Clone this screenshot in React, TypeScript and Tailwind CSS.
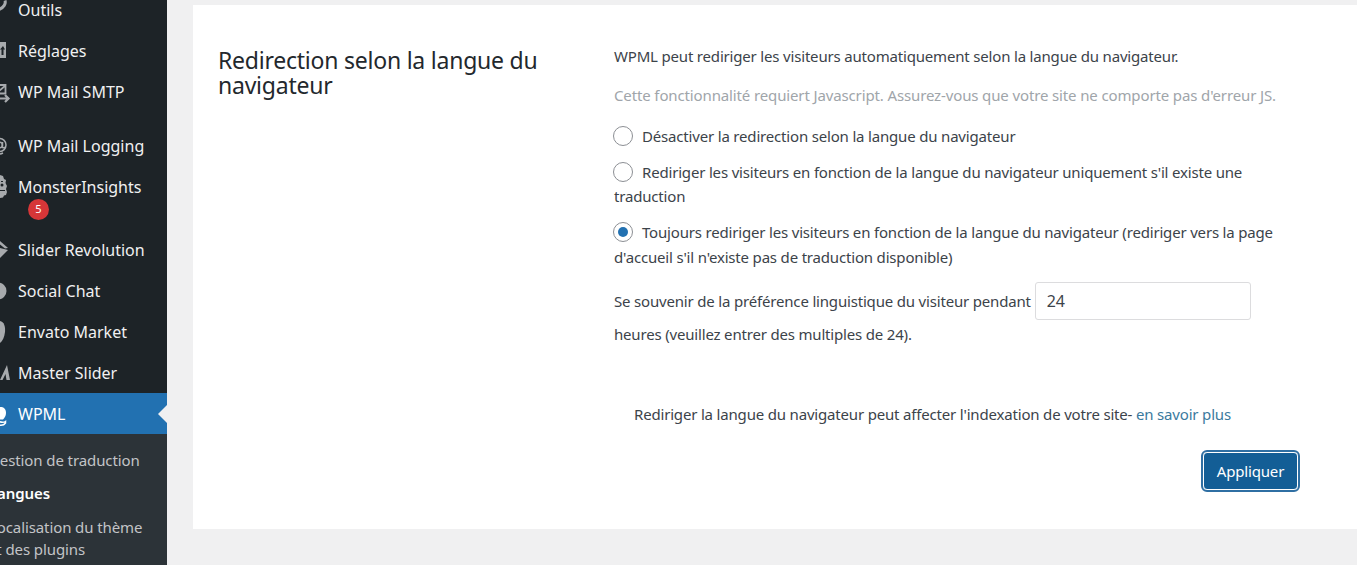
const menu = [
  { label: "Outils", icon: "tools", cls: "h-[41px] -mt-[11px]" },
  { label: "Réglages", icon: "settings", cls: "h-[41px]" },
  { label: "WP Mail SMTP", icon: "smtp", cls: "h-[41px] mb-[13px]" },
  { label: "WP Mail Logging", icon: "at", cls: "h-[41px]" },
];
const menu2 = [
  { label: "Slider Revolution", icon: "slider" },
  { label: "Social Chat", icon: "chat" },
  { label: "Envato Market", icon: "leaf" },
  { label: "Master Slider", icon: "master" },
];

// the sidebar is scrolled sideways in the picture, so the icons are cut at x=0
function MenuIcon({ name }: { name: string }) {
  const c = "#a7aaad";
  return (
    <svg width="18" height="24" viewBox="0 0 18 24" className="shrink-0 -ml-[9px] mr-[9px] overflow-visible">
      {name === "tools" && <path d="M14 2.500c1 3-1 7-6 9" fill="none" stroke={c} strokeWidth="3" />}
      {name === "settings" && (
        <path d="M8 3h7v16H8zM12 7l-3 3.500h1.500V16h2v-5.500H14z" fill={c} fillRule="evenodd" />
      )}
      {name === "smtp" && (
        <g fill="none" stroke={c} strokeWidth="1.800">
          <path d="M8 5h6.500v8.500H8" />
          <path d="M8 11l6-5" />
          <path d="M9 18.500h8M14 15l3.500 3.500L14 22" strokeWidth="2.200" />
        </g>
      )}
      {name === "at" && (
        <g fill="none" stroke={c} strokeWidth="1.500">
          <circle cx="8.500" cy="11" r="6.500" />
          <circle cx="8.500" cy="11" r="2.800" />
          <path d="M11.500 8v5c0 1 1.500 1 2.500 0M6 19.500c2 1 4 .5 6-.5" />
        </g>
      )}
      {name === "monster" && (
        <g>
          <path d="M9 0l3 1 1 3 2 1-.5 3 1.500 3-1 3 1 3-1 3-2 .5-1 2-3 .5z" fill={c} />
          <circle cx="11" cy="10" r="1.500" fill="#1d2327" />
          <path d="M9 15h5v1H9zM10 6h2v1h-2z" fill="#1d2327" />
        </g>
      )}
      {name === "slider" && (
        <g fill={c}>
          <path d="M9 3l8 7-3 .5-5-4z" />
          <path d="M9 10l8 2-8 8z" />
        </g>
      )}
      {name === "chat" && <circle cx="7" cy="12" r="8.500" fill={c} />}
      {name === "leaf" && <path d="M9 1c4 1 5.500 5 5 11-.5 5-2.500 9-5 11z" fill={c} />}
      {name === "master" && <path d="M9 19l7-15 3 15h-3.500l-1-6-3 6z" fill={c} />}
      {name === "wpml" && (
        <g fill="#fff">
          <path d="M8 5c4-.5 7 1 7 6 0 3-1.500 5-3 6.500H8z" />
          <path d="M8 19.500c2.500 1 5 1 6.500 0v1.500c-1 1.500-4 2.500-6.500 2z" fill="none" stroke="#fff" strokeWidth="1.500" />
        </g>
      )}
    </svg>
  );
}

function MenuRow({ label, icon, cls }: { label: string; icon: string; cls: string }) {
  return (
    <div className={`flex items-center text-[#f0f0f1] ${cls}`}>
      <MenuIcon name={icon} />
      <span>{label}</span>
    </div>
  );
}

function Radio({ checked }: { checked?: boolean }) {
  return (
    <span className="inline-flex w-[20px] h-[20px] rounded-full border border-[#8c8f94] bg-white items-center justify-center align-[1px] mr-[9px] -ml-[1px]">
      <span className={checked ? "block w-[10px] h-[10px] rounded-full bg-[#2271b1]" : "block w-[10px] h-[10px]"} />
    </span>
  );
}

export default function App() {
  return (
    <div className="flex h-[565px] overflow-hidden bg-[#f0f0f1] font-['Noto_Sans',sans-serif] text-[#3c434a]">
      <aside className="w-[167px] shrink-0 bg-[#1d2327] text-[16px] overflow-hidden">
        {menu.map((m) => (
          <MenuRow key={m.label} {...m} />
        ))}
        <div className="h-[63px] text-[#f0f0f1]">
          <div className="flex items-center h-[41px]">
            <MenuIcon name="monster" />
            <span>MonsterInsights</span>
          </div>
          <div className="-mt-[8px] ml-[28px] w-[21px] h-[21px] rounded-full bg-[#d63638] text-white text-[11px] flex items-center justify-center">
            5
          </div>
        </div>
        {menu2.map((m) => (
          <MenuRow key={m.label} {...m} cls="h-[41px]" />
        ))}
        <div className="relative flex items-center h-[41px] bg-[#2271b1] text-white">
          <MenuIcon name="wpml" />
          <span>WPML</span>
          <span className="absolute right-0 top-[12px] w-0 h-0 border-y-[9px] border-y-transparent border-r-[9px] border-r-[#f0f0f1]" />
        </div>
        <div className="bg-[#2c3338] h-[200px] text-[15px] tracking-[-0.1px] text-[#c3c4c7] pt-[15px] -ml-[11px]">
          <div className="leading-[22px]">Gestion de traduction</div>
          <div className="mt-[11px] leading-[22px] font-semibold text-white">Langues</div>
          <div className="mt-[12px] leading-[22px]">
            Localisation du thème
            <br />
            <span className="-ml-[1px]">et des plugins</span>
          </div>
        </div>
      </aside>

      <main className="flex-1 pl-[26px] pt-[5px]">
        <section className="h-[524px] bg-white flex">
          <h3 className="w-[421px] shrink-0 pl-[25px] pt-[43px] text-[23px] tracking-[-0.23px] leading-[25px] text-[#23282d] font-normal">
            Redirection selon la langue du navigateur
          </h3>
          <div className="w-[665px] text-[15px] tracking-[-0.18px] leading-[24px] text-[#3c434a] pt-[39px]">
            <p>WPML peut rediriger les visiteurs automatiquement selon la langue du navigateur.</p>
            <p className="mt-[15px] text-[#a0a5aa] tracking-[-0.13px]">
              Cette fonctionnalité requiert Javascript. Assurez-vous que votre site ne comporte pas d'erreur JS.
            </p>
            <p className="mt-[17px]">
              <Radio />
              Désactiver la redirection selon la langue du navigateur
            </p>
            <p className="mt-[12px]">
              <Radio />
              Rediriger les visiteurs en fonction de la langue du navigateur uniquement s'il existe une traduction
            </p>
            <p className="mt-[12px] leading-[25px]">
              <Radio checked />
              Toujours rediriger les visiteurs en fonction de la langue du navigateur (rediriger vers la page d'accueil
              s'il n'existe pas de traduction disponible)
            </p>
            <div className="mt-[12px] flex items-center h-[38px]">
              <span>Se souvenir de la préférence linguistique du visiteur pendant</span>
              <input
                readOnly
                value="24"
                className="ml-[4px] w-[216px] h-[38px] border border-[#dcdcde] rounded-[3px] px-[11px] text-[16px] text-[#3c434a] outline-none"
              />
            </div>
            <p className="mt-[2px]">heures (veuillez entrer des multiples de 24).</p>
            <p className="mt-[56px] ml-[20px]">
              Rediriger la langue du navigateur peut affecter l'indexation de votre site-{" "}
              <a className="text-[#3b7a9e]">en savoir plus</a>
            </p>
            <div className="mt-[26px] flex justify-end">
              <button className="h-[38px] w-[95px] -mr-[19px] rounded-[4px] bg-[#135e96] text-white text-[15px] border border-white outline-2 outline-[#2f6fa3]">
                Appliquer
              </button>
            </div>
          </div>
        </section>
      </main>
    </div>
  );
}
